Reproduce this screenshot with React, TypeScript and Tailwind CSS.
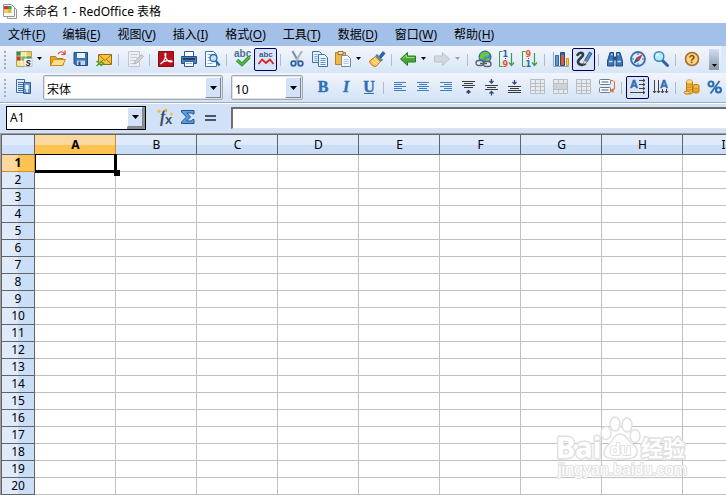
import { useState } from "react";
import type { ReactNode } from "react";

const COLUMNS = ["A", "B", "C", "D", "E", "F", "G", "H", "I"];
const ROWS = Array.from({ length: 20 }, (_, i) => i + 1);

const MENUS = [
  { label: "文件", key: "F" },
  { label: "编辑", key: "E" },
  { label: "视图", key: "V" },
  { label: "插入", key: "I" },
  { label: "格式", key: "O" },
  { label: "工具", key: "T" },
  { label: "数据", key: "D" },
  { label: "窗口", key: "W" },
  { label: "帮助", key: "H" },
];

function Icon({ children }: { children: ReactNode }) {
  return (
    <svg className="w-[18px] h-[18px] shrink-0 overflow-visible" viewBox="0 0 18 18" fill="none" aria-hidden="true">
      {children}
    </svg>
  );
}

function ToolButton({ label, pressed, children }: { label: string; pressed?: boolean; children: ReactNode }) {
  return (
    <button
      type="button"
      aria-label={label}
      aria-pressed={pressed}
      className={`w-[23px] h-[23px] shrink-0 flex items-start rounded-[2px] ${
        pressed ? "pt-px pl-[2px] border border-[#00005c] bg-[#d9e5f6]" : "pt-[2px] pl-[3px] hover:bg-[#c5d9f3]"
      }`}
    >
      {children}
    </button>
  );
}

function Caret({ color = "#000" }: { color?: string }) {
  return (
    <svg className="w-[5px] h-[3px]" viewBox="0 0 5 3" aria-hidden="true">
      <path d="M0 0h5L2.500 3z" fill={color} />
    </svg>
  );
}

function DropButton({ label, disabled }: { label: string; disabled?: boolean }) {
  return (
    <button type="button" aria-label={label} disabled={disabled} className="w-[11px] h-[23px] shrink-0 flex items-center pl-[2px] pb-[2px]">
      <Caret color={disabled ? "#9aa3ae" : "#000"} />
    </button>
  );
}

function Separator() {
  return (
    <span className="w-2 shrink-0 flex pl-[3px]">
      <span className="w-px h-3 bg-[#b4bcc8]" />
    </span>
  );
}

function Handle() {
  return (
    <span className="w-3 shrink-0 flex flex-col gap-[2px] pl-1">
      <span className="w-[2px] h-[2px] bg-[#a3adbb]" />
      <span className="w-[2px] h-[2px] bg-[#a3adbb]" />
      <span className="w-[2px] h-[2px] bg-[#a3adbb]" />
      <span className="w-[2px] h-[2px] bg-[#a3adbb]" />
      <span className="w-[2px] h-[2px] bg-[#a3adbb]" />
    </span>
  );
}

function ArrowFace() {
  return (
    <span className="w-4 h-full flex items-center justify-center bg-[#d3e2f8] border border-t-white border-l-white border-r-[#7d8794] border-b-[#7d8794]">
      <svg className="w-[7px] h-1" viewBox="0 0 7 4" aria-hidden="true">
        <path d="M0 0h7L3.500 4z" fill="#000" />
      </svg>
    </span>
  );
}

function Combo({ label, options, width }: { label: string; options: string[]; width: string }) {
  return (
    <div className={`relative h-[25px] shrink-0 rounded-[2px] border border-[#a3a9b2] bg-white shadow-[inset_0_0_0_1px_#dfe3e8] ${width}`}>
      <select aria-label={label} className="appearance-none w-full h-full pl-[3px] pr-5 pb-[3px] text-xs bg-transparent outline-none">
        {options.map((o) => (
          <option key={o}>{o}</option>
        ))}
      </select>
      <span className="absolute right-px inset-y-px pointer-events-none">
        <ArrowFace />
      </span>
    </div>
  );
}

/* ---------- icons ---------- */

function SheetIcon() {
  return (
    <Icon>
      <path d="M1.500 1.500h15v15h-15z" fill="#f7eeb0" stroke="#a9a06a" />
      <path d="M2 2h4v4H2z" fill="#2f8f3f" />
      <path d="M2 6h4v5H2z" fill="#cf3a2c" />
      <path d="M6 2h5v4H6z" fill="#f5e9a6" />
      <path d="M11 2h5v4h-5z" fill="#e9cf4a" />
      <path d="M6 6h5v5H6z" fill="#6fbf45" />
      <path d="M11 6h5v3h-5z" fill="#3f9b45" />
      <path d="M2 11h4v5H2z" fill="#fbe27a" />
      <path d="M6 2v14M11 2v14M2 6h14M2 11h14" stroke="#fff" strokeOpacity=".6" />
      <path d="M9 8.500h8v8H9z" fill="#fff" stroke="#aaa" strokeWidth=".6" />
      <text x="10.500" y="15.500" fontSize="10" fontWeight="bold" fontStyle="italic" fill="#222" fontFamily="Liberation Sans, sans-serif">s</text>
    </Icon>
  );
}

function OpenIcon() {
  return (
    <Icon>
      <path d="M1.500 15.500v-9h5l1.500 2h6v7z" fill="#e5a52d" stroke="#b97a16" />
      <path d="M1.500 15.500l3-6h12l-3 6z" fill="#ffe08a" stroke="#c98b1c" />
      <path d="M9 4c1.500-3 5-3 6.500 0" stroke="#e0392b" strokeWidth="1.200" />
      <path d="M12.500 4.500H16v-4" stroke="#e0392b" strokeWidth="1.200" />
    </Icon>
  );
}

function SaveIcon() {
  return (
    <Icon>
      <path d="M2 2.500h13.500v13H4l-2-2z" fill="#3b74b4" stroke="#1f4c86" />
      <path d="M5 3h8v5H5z" fill="#e9f1fb" />
      <path d="M5 10.500h8V15H5z" fill="#c5d5ea" />
      <path d="M6.500 11.500h2V15h-2z" fill="#24508a" />
    </Icon>
  );
}

function MailIcon() {
  return (
    <Icon>
      <path d="M3.500 4.500h13v10h-13z" fill="#f7c341" stroke="#9b6a14" />
      <path d="M4 5l6 5.500L16 5M4 14l4.500-4.500M16 14l-4.500-4.500" stroke="#a87618" />
      <path d="M1.500 11l3 2.500-3 2.500M5.500 11l3 2.500-3 2.500" stroke="#3fa53a" strokeWidth="1.600" />
    </Icon>
  );
}

function EditIcon() {
  return (
    <Icon>
      <path d="M2.500 1.500h11v15h-11z" fill="#eceff2" stroke="#c2c7cd" />
      <path d="M4.500 4.500h7M4.500 7.500h7M4.500 10.500h5M4.500 13.500h4" stroke="#c5cad1" />
      <path d="M8 14l1-3 6.500-6.500 2 2L11 13z" fill="#d0d4d9" stroke="#a9aeb5" strokeWidth=".8" />
    </Icon>
  );
}

function PdfIcon() {
  return (
    <Icon>
      <path d="M1.500 1.500h15v15h-15z" fill="#b5121b" stroke="#8a0c12" />
      <path d="M3.500 14c3-1.500 5.800-7 5.400-10.500-.8-1-1.500.5-.6 3 1 3 3.500 5.800 6.700 5.300 1-.8-1.500-1.500-4.500-1.200-3 .3-5.500 1.400-7 3.400z" stroke="#fff" strokeWidth="1.100" />
    </Icon>
  );
}

function PrintIcon() {
  return (
    <Icon>
      <path d="M4.500 1.500h9v5h-9z" fill="#fff" stroke="#2b5d98" />
      <path d="M1.500 6.500h15v7h-15z" fill="#4a80bd" stroke="#234f87" />
      <path d="M3 8h12v2H3z" fill="#1d3f6d" />
      <path d="M4.500 11.500h9v5h-9z" fill="#fff" stroke="#2b5d98" />
      <path d="M6 13.500h6" stroke="#9cb7d7" />
    </Icon>
  );
}

function PreviewIcon() {
  return (
    <Icon>
      <path d="M2.500 1.500h8l3 3v12h-11z" fill="#fff" stroke="#3b74b4" />
      <path d="M4.500 4.500h4M4.500 7.500h3M4.500 10.500h3M4.500 13.500h5" stroke="#8cb0d9" />
      <circle cx="10.500" cy="8" r="3.500" fill="#bfe3f7" stroke="#2a66a8" strokeWidth="1.300" />
      <path d="M13 11l3.500 4.500" stroke="#2a66a8" strokeWidth="2.200" />
    </Icon>
  );
}

function SpellIcon() {
  return (
    <Icon>
      <text x="0" y="7" fontSize="10" fontWeight="bold" fill="#4d6f96" fontFamily="Liberation Sans, sans-serif">abc</text>
      <path d="M3 10l5 4.500L15.500 7" stroke="#2e9a2b" strokeWidth="3.400" />
      <path d="M3 10l5 4.500L15.500 7" stroke="#5cc04b" strokeWidth="1.200" />
    </Icon>
  );
}

function AutoSpellIcon() {
  return (
    <Icon>
      <text x="2" y="7" fontSize="8" fontWeight="bold" fill="#3a5f8c" fontFamily="Liberation Sans, sans-serif">abc</text>
      <path d="M1.500 14L5 9.500l4 3.500 4-3.500 3.500 4.500" stroke="#d6252b" strokeWidth="1.800" strokeLinejoin="round" />
    </Icon>
  );
}

function CutIcon() {
  return (
    <Icon>
      <path d="M4.500 1l6 11" stroke="#7e8b9b" strokeWidth="2" />
      <path d="M14 1L7.500 12" stroke="#a9b4c1" strokeWidth="2" />
      <circle cx="5.500" cy="13.500" r="2.300" stroke="#2d65a5" strokeWidth="1.800" />
      <circle cx="12.500" cy="13.500" r="2.300" stroke="#2d65a5" strokeWidth="1.800" />
    </Icon>
  );
}

function CopyIcon() {
  return (
    <Icon>
      <path d="M1.500 1.500h7l2 2v9h-9z" fill="#e4effb" stroke="#3b74b4" />
      <path d="M3.500 4.500h3M3.500 6.500h3M3.500 8.500h3M3.500 10.500h3" stroke="#7fa8d6" />
      <path d="M7.500 4.500h6l3 3v9h-9z" fill="#eef5fd" stroke="#3b74b4" />
      <path d="M9.500 8.500h5M9.500 10.500h5M9.500 12.500h5M9.500 14.500h5" stroke="#5e93cc" />
    </Icon>
  );
}

function PasteIcon() {
  return (
    <Icon>
      <path d="M1.500 2.500h10v12h-10z" fill="#f3b73f" stroke="#bb8120" />
      <path d="M4 1.500h5v3H4z" fill="#f7e0a3" stroke="#9b7435" />
      <path d="M7.500 5.500h6l3 3v8h-9z" fill="#f4f7fb" stroke="#6f8fb5" />
      <path d="M9.500 9.500h5M9.500 11.500h5M9.500 13.500h5" stroke="#b3c7df" />
    </Icon>
  );
}

function BrushIcon() {
  return (
    <Icon>
      <path d="M11.500 6l3.500-4.500 2 2L13 8z" fill="#2d65a5" stroke="#1e4b82" strokeWidth=".8" />
      <path d="M9 4.500l5.500 5.500-2 1.500L7.500 6.500z" fill="#5a8bc0" stroke="#28568f" strokeWidth=".8" />
      <path d="M7.500 6.500l5 5L8 16.500c-3 0-6-2-6.500-5.500z" fill="#f8c64d" stroke="#b97a16" />
      <path d="M4 10.500l5 4M6 8.500l5 4.500" stroke="#fff0ba" />
    </Icon>
  );
}

function ArrowIcon({ flip, muted }: { flip?: boolean; muted?: boolean }) {
  return (
    <Icon>
      <path
        d={flip ? "M16.500 9L9.500 2.500v3.500h-8v6h8v3.500z" : "M1.500 9l7-6.500v3.500h8v6h-8v3.500z"}
        fill={muted ? "#d3d8de" : "#45a836"}
        stroke={muted ? "#bdc3cb" : "#287c24"}
      />
      {!muted && <path d="M4 8.500L7.500 5v2.500h8" stroke="#a2df82" />}
    </Icon>
  );
}

function LinkIcon() {
  return (
    <Icon>
      <circle cx="10" cy="7" r="6" fill="#3c87d0" stroke="#245c9b" />
      <path d="M5.500 4c3-3 6-3 9 0l-2 3-3-.5-1 3-4-1zM10 9l4-1 1 2-3 2z" fill="#6cc63c" />
      <rect x="1" y="10.500" width="7.500" height="5" rx="2.500" fill="#e7ebef" stroke="#56616e" strokeWidth="1.300" />
      <rect x="8.500" y="11.500" width="7.500" height="5" rx="2.500" fill="#e7ebef" stroke="#56616e" strokeWidth="1.300" />
      <path d="M5 13.500h7" stroke="#56616e" strokeWidth="1.500" />
    </Icon>
  );
}

function SortIcon({ top, bottom, topColor, bottomColor }: { top: string; bottom: string; topColor: string; bottomColor: string }) {
  return (
    <Icon>
      <path d="M4.500 1.500h-3v15h3" stroke="#3f9b45" />
      <text x="4.500" y="7" fontSize="8" fontWeight="bold" fill={topColor} fontFamily="DejaVu Sans, sans-serif">{top}</text>
      <text x="4.500" y="17" fontSize="8" fontWeight="bold" fill={bottomColor} fontFamily="DejaVu Sans, sans-serif">{bottom}</text>
      <path d="M7.500 8v3" stroke="#2d65a5" strokeDasharray="1 1" />
      <path d="M13.500 3v13M11 12.500l2.500 3 2.500-3" stroke="#3f9b45" strokeWidth="1.200" />
    </Icon>
  );
}

function ChartIcon() {
  return (
    <Icon>
      <path d="M1.500 2v14.500H17" stroke="#8aa6c8" />
      <path d="M3.500 5.500h3v10h-3z" fill="#5b9bdc" stroke="#2d65a5" />
      <path d="M8.500 2.500h4v13h-4z" fill="#2f6db0" stroke="#1f4c86" />
      <path d="M9 5h3v10H9z" fill="#e05a24" />
      <path d="M14.500 8.500h2v7h-2z" fill="#fcd35c" stroke="#d8951a" />
    </Icon>
  );
}

function DrawIcon() {
  return (
    <Icon>
      <path d="M2.500 5c2-3 5-3 5.500-.5S2.500 9 3 12s4.500 3.500 7 2" stroke="#2f3b49" strokeWidth="2.600" strokeLinecap="round" />
      <path d="M8.500 14.500l1-4L14.500 2l2.500 1.500L12 12z" fill="#4a8bd0" stroke="#1f4c86" strokeWidth=".8" />
      <path d="M8.500 14.500l1-4 2.500 1.500z" fill="#f3d59a" />
    </Icon>
  );
}

function FindIcon() {
  return (
    <Icon>
      <path d="M4 2.500h3.500V7L8 16H1.500V11zM10.500 2.500H14L16.500 11v5H10z" fill="#3d76b6" stroke="#1f4c86" />
      <path d="M7.500 6.500h3v4h-3z" fill="#24508a" />
      <path d="M3 11.500h3.500M11.500 11.500H15M5 4.500h1.500M11.500 4.500H13" stroke="#c3dbf3" strokeWidth="1.500" />
    </Icon>
  );
}

function CompassIcon() {
  return (
    <Icon>
      <circle cx="9" cy="9" r="7" fill="#dcebf9" stroke="#3b70ad" strokeWidth="1.800" />
      <path d="M9 3v2M9 13v2M3 9h2M13 9h2" stroke="#3b70ad" />
      <path d="M14 4l-3.500 6.500-3-3z" fill="#d6332c" />
      <path d="M4 14l3.500-6.500 3 3z" fill="#2c5d9a" />
    </Icon>
  );
}

function ZoomIcon() {
  return (
    <Icon>
      <path d="M10.500 10.500l5 5" stroke="#2a62a4" strokeWidth="3" strokeLinecap="round" />
      <circle cx="7" cy="6.500" r="4.800" fill="#b5ecfa" stroke="#3b86c4" strokeWidth="1.500" />
      <path d="M4.500 6c.3-1.500 1.300-2.200 2.500-2.200" stroke="#fff" strokeWidth="1.200" />
    </Icon>
  );
}

function HelpIcon() {
  return (
    <Icon>
      <circle cx="9" cy="9" r="6.500" fill="#fdd57a" stroke="#a96a22" strokeWidth="1.600" />
      <text x="5.500" y="13" fontSize="11" fontWeight="bold" fill="#8a3f10" fontFamily="Liberation Sans, sans-serif">?</text>
    </Icon>
  );
}

function StylesIcon() {
  return (
    <Icon>
      <path d="M1.500 1.500h8v13h-8z" fill="#dfeaf8" stroke="#3b70ad" />
      <path d="M3 4.500h5M3 6.500h5M3 8.500h5M3 10.500h5M3 12.500h5" stroke="#3b70ad" />
      <path d="M8.500 4.500h7v11h-7z" fill="#6d9bd0" stroke="#2d5f9d" />
      <path d="M10.500 7h3v4h-3z" fill="#fff" />
      <path d="M12 10v4" stroke="#fff" strokeWidth="1.500" />
    </Icon>
  );
}

function LetterIcon({ letter, italic, underline }: { letter: string; italic?: boolean; underline?: boolean }) {
  return (
    <Icon>
      <text
        x="9"
        y="14"
        textAnchor="middle"
        fontSize="16"
        fontWeight="bold"
        fontStyle={italic ? "italic" : "normal"}
        fill="#2f70b6"
        stroke="#2f70b6"
        strokeWidth=".4"
        fontFamily="Liberation Serif, serif"
      >
        {letter}
      </text>
      {underline && <path d="M4 15.500h10" stroke="#2f70b6" />}
    </Icon>
  );
}

function AlignIcon({ align }: { align: "left" | "center" | "right" }) {
  const d = {
    left: "M3 4.500h12M3 6.500h8M3 8.500h12M3 10.500h8M3 12.500h12",
    center: "M3 4.500h12M5 6.500h8M3 8.500h12M5 10.500h8M3 12.500h12",
    right: "M3 4.500h12M7 6.500h8M3 8.500h12M7 10.500h8M3 12.500h12",
  }[align];
  return (
    <Icon>
      <path d={d} stroke="#3f7cc4" />
    </Icon>
  );
}

function VAlignIcon({ align }: { align: "top" | "middle" | "bottom" }) {
  return (
    <Icon>
      {align === "top" && (
        <>
          <path d="M2 3.500h13M4 5.500h9M2 7.500h13M4 9.500h9" stroke="#3c3c3c" />
          <path d="M8.500 12v4M6.500 14.500l2-2 2 2" stroke="#3a4674" strokeWidth="1.300" />
        </>
      )}
      {align === "middle" && (
        <>
          <path d="M2 7.500h13M4 9.500h9M2 11.500h13" stroke="#3c3c3c" />
          <path d="M8.500 1v4M6.500 3l2 2 2-2M8.500 17.500v-4M6.500 15.500l2-2 2 2" stroke="#3a4674" strokeWidth="1.300" />
        </>
      )}
      {align === "bottom" && (
        <>
          <path d="M2 8.500h13M4 10.500h9M2 12.500h13M2 14.500h13" stroke="#3c3c3c" />
          <path d="M8.500 2v4M6.500 4l2 2 2-2" stroke="#3a4674" strokeWidth="1.300" />
        </>
      )}
    </Icon>
  );
}

function CellsIcon({ merged }: { merged?: boolean }) {
  return (
    <Icon>
      <path d="M1.500 1.500h14v14h-14z" fill="#e7eaee" stroke="#b9bec5" />
      <path d={merged ? "M1.500 5.500h14M1.500 11.500h14M6.500 1.500v4M11.500 1.500v4M6.500 11.500v4M11.500 11.500v4" : "M1.500 5.500h14M1.500 8.500h14M1.500 12.500h14M6.500 1.500v14M11.500 1.500v14"} stroke="#b9bec5" />
      {merged && <path d="M2 6h13v5H2z" fill="#ced2d7" />}
    </Icon>
  );
}

function WrapIcon() {
  return (
    <Icon>
      <rect x="1.500" y="1.500" width="11" height="5" rx="1" fill="#fff" stroke="#6d7b8d" />
      <path d="M3.500 4h7" stroke="#2d65a5" />
      <rect x="1.500" y="9.500" width="11" height="5" rx="1" fill="#fff" stroke="#6d7b8d" />
      <path d="M3.500 12h7" stroke="#2d65a5" />
      <path d="M13 2.500h2l1.500 1.500v7l-2 1.500" stroke="#e66a2c" />
      <path d="M12 12.500l3.500-2.500v5z" fill="#e66a2c" />
    </Icon>
  );
}

function TextAcrossIcon() {
  return (
    <Icon>
      <text x="1" y="10" fontSize="11" fontWeight="bold" fill="#2f6db0" stroke="#2f6db0" strokeWidth=".4" fontFamily="Liberation Sans, sans-serif">A</text>
      <path d="M10 2.500h6M10 6.500h6M10 10.500h6M1 14.500h15M14 1l2 1.500L14 4M14 5l2 1.500L14 8M14 9l2 1.500L14 12M14 13l2 1.500-2 1.500" stroke="#444" />
    </Icon>
  );
}

function TextDownIcon() {
  return (
    <Icon>
      <text x="8" y="10" fontSize="11" fontWeight="bold" fill="#2f6db0" stroke="#2f6db0" strokeWidth=".4" fontFamily="Liberation Sans, sans-serif">A</text>
      <path d="M2.500 2v13M6.500 2v13M10.500 11v4M14.500 11v4M1 13l1.500 2L4 13M5 13l1.500 2L8 13M9 13l1.500 2 1.500-2M13 13l1.500 2 1.500-2" stroke="#444" />
    </Icon>
  );
}

function CoinsIcon() {
  return (
    <Icon>
      <path d="M3.500 3.500c0-2 6-2 6 0v11c0 2-6 2-6 0z" fill="#f5b63c" stroke="#b97a16" />
      <path d="M3.500 6c1 1.200 5 1.200 6 0M3.500 8.500c1 1.200 5 1.200 6 0M3.500 11c1 1.200 5 1.200 6 0" stroke="#c98b1c" />
      <ellipse cx="6.500" cy="3.500" rx="3" ry="1.300" fill="#ffe08a" />
      <path d="M10 7.500c0-1.500 6-1.500 6 0v6c0 2-6 2-6 0z" fill="#f5b63c" stroke="#b97a16" />
      <path d="M10 10c1 1.200 5 1.200 6 0M10 12.500c1 1.200 5 1.200 6 0" stroke="#c98b1c" />
      <ellipse cx="4" cy="14.500" rx="3" ry="1.500" fill="#ffd873" stroke="#b97a16" />
    </Icon>
  );
}

function PercentIcon() {
  return (
    <Icon>
      <circle cx="5" cy="6" r="2.500" stroke="#2f6db0" strokeWidth="2.200" />
      <circle cx="12.500" cy="12" r="2.500" stroke="#2f6db0" strokeWidth="2.200" />
      <path d="M13.500 3L4.500 15.500" stroke="#2f6db0" strokeWidth="1.800" />
    </Icon>
  );
}

function FunctionIcon() {
  return (
    <Icon>
      <text x="4" y="13.500" fontSize="16" fontStyle="italic" fontWeight="bold" fill="#3f5063" fontFamily="Liberation Serif, serif">f</text>
      <text x="9" y="15.500" fontSize="13" fontWeight="bold" fill="#3f5063" fontFamily="Liberation Sans, sans-serif">x</text>
      <path d="M3 1l1 1.500L5.500 3 4 4 3 5.500 2 4 .5 3 2 2.500zM10 0l.8 1.200L12 2l-1.200.8L10 4l-.8-1.200L8 2zM15.500 4l.7 1.300 1.300.7-1.300.7-.7 1.300-.7-1.300-1.300-.7 1.300-.7z" fill="#f5bb2d" />
    </Icon>
  );
}

function SumIcon() {
  return (
    <Icon>
      <path d="M2.500 2.500h12.500v3.500h-1.500L12.500 5H8l3.500 4-4 4h5l1-1.500H15V15.500H2.500V14l5-5-5-5z" fill="#5b9ce0" stroke="#1f5596" />
    </Icon>
  );
}

function AppIcon() {
  return (
    <svg className="w-4 h-[17px] shrink-0" viewBox="0 0 16 17" fill="none" aria-hidden="true">
      <path d="M4.500 3.500h6l3 3v9h-9z" fill="#fff" stroke="#8c95a0" />
      <path d="M.5 1.500h8l3 3v9H.5z" fill="#f6f8fa" stroke="#8c95a0" />
      <path d="M1 3h4v3.500H1z" fill="#d2342c" />
      <path d="M5 3h3.500v3.500H5z" fill="#3f9b45" />
      <path d="M1 6.500h4V10H1z" fill="#f2cf55" />
      <path d="M5 6.500h3.500V10H5z" fill="#e6b83f" />
    </svg>
  );
}

/* ---------- layout ---------- */

function StandardToolbar() {
  return (
    <div className="flex bg-[#dce9f9]">
      <div role="toolbar" aria-label="标准" className="h-[27px] flex-1 min-w-0 mr-[5px] flex items-center bg-linear-to-b from-[#f4f6fc] to-[#d6e5f8]">
        <Handle />
        <ToolButton label="新建"><SheetIcon /></ToolButton>
        <DropButton label="新建选项" />
        <ToolButton label="打开"><OpenIcon /></ToolButton>
        <ToolButton label="保存"><SaveIcon /></ToolButton>
        <ToolButton label="发送邮件"><MailIcon /></ToolButton>
        <Separator />
        <ToolButton label="编辑文件"><EditIcon /></ToolButton>
        <Separator />
        <ToolButton label="导出 PDF"><PdfIcon /></ToolButton>
        <ToolButton label="打印"><PrintIcon /></ToolButton>
        <ToolButton label="打印预览"><PreviewIcon /></ToolButton>
        <Separator />
        <ToolButton label="拼写检查"><SpellIcon /></ToolButton>
        <ToolButton label="自动拼写检查" pressed><AutoSpellIcon /></ToolButton>
        <Separator />
        <ToolButton label="剪切"><CutIcon /></ToolButton>
        <ToolButton label="复制"><CopyIcon /></ToolButton>
        <ToolButton label="粘贴"><PasteIcon /></ToolButton>
        <DropButton label="粘贴选项" />
        <ToolButton label="格式刷"><BrushIcon /></ToolButton>
        <Separator />
        <ToolButton label="撤消"><ArrowIcon /></ToolButton>
        <DropButton label="撤消列表" />
        <ToolButton label="恢复"><ArrowIcon flip muted /></ToolButton>
        <DropButton label="恢复列表" disabled />
        <Separator />
        <ToolButton label="超链接"><LinkIcon /></ToolButton>
        <ToolButton label="升序排序"><SortIcon top="1" bottom="9" topColor="#2d65a5" bottomColor="#e0562b" /></ToolButton>
        <ToolButton label="降序排序"><SortIcon top="9" bottom="1" topColor="#e0562b" bottomColor="#2d65a5" /></ToolButton>
        <Separator />
        <ToolButton label="插入图表"><ChartIcon /></ToolButton>
        <ToolButton label="绘图" pressed><DrawIcon /></ToolButton>
        <Separator />
        <ToolButton label="查找和替换"><FindIcon /></ToolButton>
        <ToolButton label="导航"><CompassIcon /></ToolButton>
        <ToolButton label="显示比例"><ZoomIcon /></ToolButton>
        <Separator />
        <ToolButton label="帮助"><HelpIcon /></ToolButton>
        <button type="button" aria-label="更多" className="ml-auto mr-[2px] w-[10px] h-[21px] shrink-0 flex items-end justify-center pb-[3px] bg-linear-to-b from-[#cfdff5] to-[#8c97a8]">
          <Caret />
        </button>
      </div>
    </div>
  );
}

function FormatToolbar() {
  return (
    <div role="toolbar" aria-label="格式" className="h-[29px] flex items-center bg-linear-to-b from-[#f1f4fb] to-[#d3e3f7]">
      <Handle />
      <ToolButton label="样式和格式"><StylesIcon /></ToolButton>
      <span className="w-2 shrink-0" />
      <Combo label="字体名称" options={["宋体", "黑体"]} width="w-[180px]" />
      <span className="w-2 shrink-0" />
      <Combo label="字体大小" options={["10", "12", "14"]} width="w-[72px]" />
      <span className="w-2 shrink-0" />
      <ToolButton label="粗体"><LetterIcon letter="B" /></ToolButton>
      <ToolButton label="斜体"><LetterIcon letter="I" italic /></ToolButton>
      <ToolButton label="下划线"><LetterIcon letter="U" underline /></ToolButton>
      <Separator />
      <ToolButton label="左对齐"><AlignIcon align="left" /></ToolButton>
      <ToolButton label="居中"><AlignIcon align="center" /></ToolButton>
      <ToolButton label="右对齐"><AlignIcon align="right" /></ToolButton>
      <ToolButton label="顶端对齐"><VAlignIcon align="top" /></ToolButton>
      <ToolButton label="垂直居中"><VAlignIcon align="middle" /></ToolButton>
      <ToolButton label="底端对齐"><VAlignIcon align="bottom" /></ToolButton>
      <ToolButton label="合并单元格"><CellsIcon /></ToolButton>
      <ToolButton label="按行合并"><CellsIcon merged /></ToolButton>
      <ToolButton label="拆分单元格"><CellsIcon /></ToolButton>
      <ToolButton label="自动换行"><WrapIcon /></ToolButton>
      <Separator />
      <ToolButton label="横排文字" pressed><TextAcrossIcon /></ToolButton>
      <ToolButton label="竖排文字"><TextDownIcon /></ToolButton>
      <Separator />
      <ToolButton label="货币格式"><CoinsIcon /></ToolButton>
      <ToolButton label="百分比格式"><PercentIcon /></ToolButton>
    </div>
  );
}

function FormulaBar() {
  const [name, setName] = useState("A1");
  const [formula, setFormula] = useState("");

  return (
    <div className="h-[31px] flex items-start pt-[3px] pl-1.5 border-t border-[#a4abb5] bg-[#d0e1f8] shadow-[inset_0_1px_0_#fff]">
      <div className="w-[140px] h-6 shrink-0 flex border border-black bg-white">
        <input
          aria-label="名称框"
          value={name}
          onChange={(e) => setName(e.target.value)}
          className="flex-1 min-w-0 pl-[3px] text-xs outline-none"
        />
        <button type="button" aria-label="名称列表" className="h-full border-r-2 border-b-2 border-[#8d8d8d]">
          <ArrowFace />
        </button>
      </div>
      <div className="flex ml-[7px]">
        <ToolButton label="函数向导"><FunctionIcon /></ToolButton>
        <ToolButton label="合计"><SumIcon /></ToolButton>
        <ToolButton label="函数">
          <Icon>
            <path d="M3 8h11M3 12h11" stroke="#4a5666" strokeWidth="2" />
          </Icon>
        </ToolButton>
      </div>
      <input
        aria-label="编辑栏"
        value={formula}
        onChange={(e) => setFormula(e.target.value)}
        className="ml-[9px] mt-px flex-1 min-w-0 h-[22px] px-1 text-xs bg-white outline-none border-t-2 border-l-2 border-b border-t-[#6e6e6e] border-l-[#6e6e6e] border-b-[#e3e3e3]"
      />
    </div>
  );
}

function Sheet() {
  return (
    <div className="overflow-hidden border-t border-l border-[#a0a0a0]">
      <table className="table-fixed w-[763px] border-separate border-spacing-0 border-t border-l border-[#646464] text-xs">
        <thead>
          <tr className="h-5">
            <th aria-label="全选" className="w-[33px] p-0 border-r border-b border-[#646464] bg-linear-to-b from-[#dfebfa] from-50% to-[#cfe0f8] to-50%" />
            {COLUMNS.map((col) => (
              <th
                key={col}
                scope="col"
                className={`w-[81px] p-0 pl-px border-r border-b leading-[19px] ${
                  col === "A"
                    ? "font-bold border-[#dc8a1e] bg-linear-to-b from-[#fad8a0] from-50% to-[#fcc350] to-50%"
                    : "font-normal border-[#646464] bg-linear-to-b from-[#dfebfa] from-50% to-[#cbdef8] to-50%"
                }`}
              >
                {col}
              </th>
            ))}
          </tr>
        </thead>
        <tbody>
          {ROWS.map((row) => (
            <tr key={row} className="h-[17px]">
              <th
                scope="row"
                className={`p-0 border-r border-b leading-4 ${
                  row === 1
                    ? "font-bold border-[#dc8a1e] bg-linear-to-r from-[#fad8a0] from-50% to-[#fcc350] to-50%"
                    : "font-normal border-[#646464] bg-linear-to-r from-[#dfebfa] from-50% to-[#cbdef8] to-50%"
                }`}
              >
                {row}
              </th>
              {COLUMNS.map((col) => (
                <td key={col} className="relative p-0 border-r border-b border-[#c0c0c0]">
                  {row === 1 && col === "A" && (
                    <span className="absolute -top-px left-0 -right-[2px] -bottom-[2px] z-10 border-black border-t border-l border-r-[3px] border-b-[3px]">
                      <span className="absolute -right-[6px] -bottom-[6px] w-[6px] h-[6px] bg-black" />
                    </span>
                  )}
                </td>
              ))}
            </tr>
          ))}
        </tbody>
      </table>
    </div>
  );
}

function Watermark() {
  return (
    <svg className="absolute right-[38px] bottom-3 w-[132px] h-[68px] pointer-events-none" viewBox="0 0 132 68" aria-hidden="true">
      <g fill="#fff" stroke="#e0e0e0" strokeWidth="1.500" strokeLinejoin="round">
        <ellipse cx="50" cy="18" rx="5" ry="6.500" />
        <ellipse cx="59" cy="9" rx="5" ry="7" />
        <ellipse cx="71" cy="10" rx="5" ry="7" />
        <ellipse cx="79" cy="21" rx="5" ry="6.500" />
        <path d="M64 19c6 0 8 6 11 9 4 3 7 5 6 10s-5 6-16 6-17-1-17-6 3-7 7-11c3-3 4-8 9-8z" />
      </g>
      <g fill="#fff" stroke="#e0e0e0" strokeLinejoin="round" style={{ paintOrder: "stroke" }}>
        <text x="0" y="43" fontSize="29" fontWeight="bold" strokeWidth="3" fontFamily="Noto Sans, sans-serif">Bai</text>
        <text x="54" y="40" fontSize="17" fontWeight="bold" strokeWidth="2" fontFamily="Liberation Sans, sans-serif">du</text>
        <text x="85" y="41" fontSize="22" fontWeight="bold" strokeWidth="3" fontFamily="Noto Sans CJK SC, sans-serif">经验</text>
        <text x="2" y="60" fontSize="16" strokeWidth="2" fontFamily="Liberation Sans, sans-serif">jingyan.baidu.com</text>
      </g>
    </svg>
  );
}

export default function App() {
  return (
    <div className="relative overflow-hidden bg-white text-black font-['Noto_Sans','Noto_Sans_CJK_SC',sans-serif]">
      <header className="h-[23px] flex items-center gap-1 pl-[3px]">
        <AppIcon />
        <h1 className="text-xs whitespace-nowrap">未命名 1 - RedOffice 表格</h1>
      </header>
      <nav className="h-[23px] flex items-center gap-[17px] pl-2 bg-[#a2c0e8]">
        {MENUS.map((m) => (
          <button key={m.key} type="button" className="text-xs whitespace-nowrap">
            {m.label}(<span className="underline underline-offset-2">{m.key}</span>)
          </button>
        ))}
      </nav>
      <StandardToolbar />
      <FormatToolbar />
      <FormulaBar />
      <main>
        <Sheet />
      </main>
      <Watermark />
    </div>
  );
}
